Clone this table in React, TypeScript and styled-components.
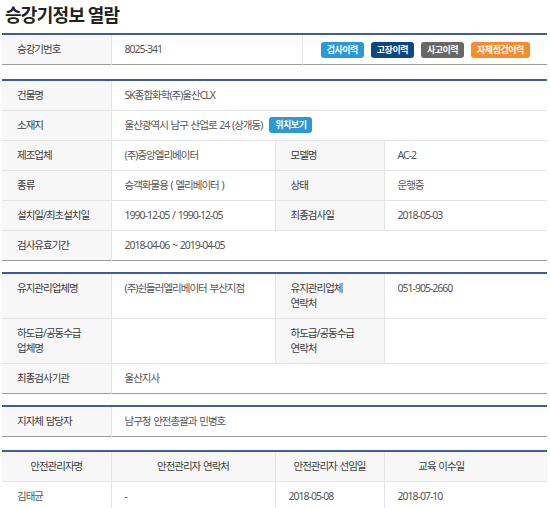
import React from "react";
import styled, { createGlobalStyle } from "styled-components";

const Global = createGlobalStyle`
  html, body { margin: 0; padding: 0; background: #fff; }
  body { font-family: "Noto Sans", "Noto Sans CJK KR", sans-serif; }
`;

const Page = styled.div`
  width: 545px;
  padding: 2px 3px 0 2px;
  font-family: "Noto Sans", "Noto Sans CJK KR", sans-serif;
`;

const Title = styled.h1`
  margin: 0 0 7px 3px;
  font-family: "Noto Sans CJK KR", sans-serif;
  font-size: 18px;
  line-height: 24px;
  font-weight: 700;
  letter-spacing: -0.7px;
  color: #222;
`;

const Table = styled.table<{ $gap: number }>`
  width: 545px;
  border-collapse: collapse;
  table-layout: fixed;
  border-top: 2px solid #3d5e9d;
  border-bottom: 1px solid #9c9c9c;
  margin-bottom: ${(p) => p.$gap}px;
  font-size: 10.5px;
  letter-spacing: -1px;
  word-spacing: 1px;
  tr + tr > td {
    border-top: 1px solid #e4e4e4;
  }
`;

const Cell = styled.td<{ $label?: boolean; $head?: boolean; $top?: boolean; $pr?: number }>`
  padding: 7px ${(p) => p.$pr ?? 0}px 7px ${(p) => (p.$head ? 0 : p.$label ? 15 : 13)}px;
  line-height: 15px;
  height: 15px;
  vertical-align: ${(p) => (p.$top ? "top" : "middle")};
  background: ${(p) => (p.$label || p.$head ? "#f7f7f7" : "#fff")};
  color: ${(p) => (p.$label || p.$head ? "#3a3a3a" : "#555")};
  text-align: ${(p) => (p.$head ? "center" : "left")};
  & + & {
    border-left: 1px solid #e4e4e4;
  }
`;

const ButtonCell = styled.td`
  padding: 0;
  text-align: center;
  vertical-align: middle;
  border-left: 1px solid #e4e4e4;
`;

const Buttons = styled.div`
  display: flex;
  justify-content: center;
  gap: 7px;
  padding-left: 1px;
`;

const Btn = styled.span<{ $bg: string }>`
  display: inline-flex;
  align-items: center;
  justify-content: center;
  height: 16px;
  padding: 0 6px;
  border-radius: 3px;
  background: ${(p) => p.$bg};
  color: #fff;
  font-family: "Noto Sans CJK KR", sans-serif;
  font-size: 9px;
  font-weight: 700;
  letter-spacing: -0.5px;
  word-spacing: 0;
  line-height: 16px;
  vertical-align: middle;
`;

const AddrBtn = styled(Btn)`
  margin-left: 7px;
  margin-top: -2px;
`;

const BLUE = "#2c98d6";

export default function App() {
  return (
    <Page>
      <Global />
      <Title>승강기정보 열람</Title>

      <Table $gap={14}>
        <colgroup>
          <col style={{ width: 109 }} />
          <col style={{ width: 191 }} />
          <col />
        </colgroup>
        <tbody>
          <tr>
            <Cell $label>승강기번호</Cell>
            <Cell>8025-341</Cell>
            <ButtonCell>
              <Buttons>
                <Btn $bg={BLUE}>검사이력</Btn>
                <Btn $bg="#0d477f">고장이력</Btn>
                <Btn $bg="#686868">사고이력</Btn>
                <Btn $bg="#f78b2e">자체점검이력</Btn>
              </Buttons>
            </ButtonCell>
          </tr>
        </tbody>
      </Table>

      <Table $gap={11}>
        <colgroup>
          <col style={{ width: 109 }} />
          <col style={{ width: 164 }} />
          <col style={{ width: 109 }} />
          <col />
        </colgroup>
        <tbody>
          <tr>
            <Cell $label>건물명</Cell>
            <Cell colSpan={3}>SK종합화학(주)울산CLX</Cell>
          </tr>
          <tr>
            <Cell $label>소재지</Cell>
            <Cell colSpan={3}>
              울산광역시 남구 산업로 24 (상개동)
              <AddrBtn $bg={BLUE}>위치보기</AddrBtn>
            </Cell>
          </tr>
          <tr>
            <Cell $label>제조업체</Cell>
            <Cell>(주)중앙엘리베이터</Cell>
            <Cell $label>모델명</Cell>
            <Cell>AC-2</Cell>
          </tr>
          <tr>
            <Cell $label>종류</Cell>
            <Cell>승객화물용 ( 엘리베이터 )</Cell>
            <Cell $label>상태</Cell>
            <Cell>운행중</Cell>
          </tr>
          <tr>
            <Cell $label>설치일/최초설치일</Cell>
            <Cell>1990-12-05 / 1990-12-05</Cell>
            <Cell $label>최종검사일</Cell>
            <Cell>2018-05-03</Cell>
          </tr>
          <tr>
            <Cell $label>검사유효기간</Cell>
            <Cell colSpan={3}>2018-04-06 ~ 2019-04-05</Cell>
          </tr>
        </tbody>
      </Table>

      <Table $gap={11}>
        <colgroup>
          <col style={{ width: 109 }} />
          <col style={{ width: 164 }} />
          <col style={{ width: 109 }} />
          <col />
        </colgroup>
        <tbody>
          <tr>
            <Cell $label>유지관리업체명<br />&nbsp;</Cell>
            <Cell $top>(주)쉰들러엘리베이터 부산지점</Cell>
            <Cell $label>유지관리업체<br />연락처</Cell>
            <Cell $top>051-905-2660</Cell>
          </tr>
          <tr>
            <Cell $label>하도급/공동수급<br />업체명</Cell>
            <Cell $top></Cell>
            <Cell $label>하도급/공동수급<br />연락처</Cell>
            <Cell $top></Cell>
          </tr>
          <tr>
            <Cell $label>최종검사기관</Cell>
            <Cell colSpan={3}>울산지사</Cell>
          </tr>
        </tbody>
      </Table>

      <Table $gap={13}>
        <colgroup>
          <col style={{ width: 109 }} />
          <col />
        </colgroup>
        <tbody>
          <tr>
            <Cell $label>지자체 담당자</Cell>
            <Cell>남구청 안전총괄과 민병호</Cell>
          </tr>
        </tbody>
      </Table>

      <Table $gap={0}>
        <colgroup>
          <col style={{ width: 109 }} />
          <col style={{ width: 164 }} />
          <col style={{ width: 109 }} />
          <col />
        </colgroup>
        <tbody>
          <tr>
            <Cell $head>안전관리자명</Cell>
            <Cell $head>안전관리자 연락처</Cell>
            <Cell $head>안전관리자 선임일</Cell>
            <Cell $head $pr={49}>교육 이수일</Cell>
          </tr>
          <tr>
            <Cell style={{ paddingLeft: 15 }}>김태균</Cell>
            <Cell>-</Cell>
            <Cell>2018-05-08</Cell>
            <Cell>2018-07-10</Cell>
          </tr>
        </tbody>
      </Table>
    </Page>
  );
}
